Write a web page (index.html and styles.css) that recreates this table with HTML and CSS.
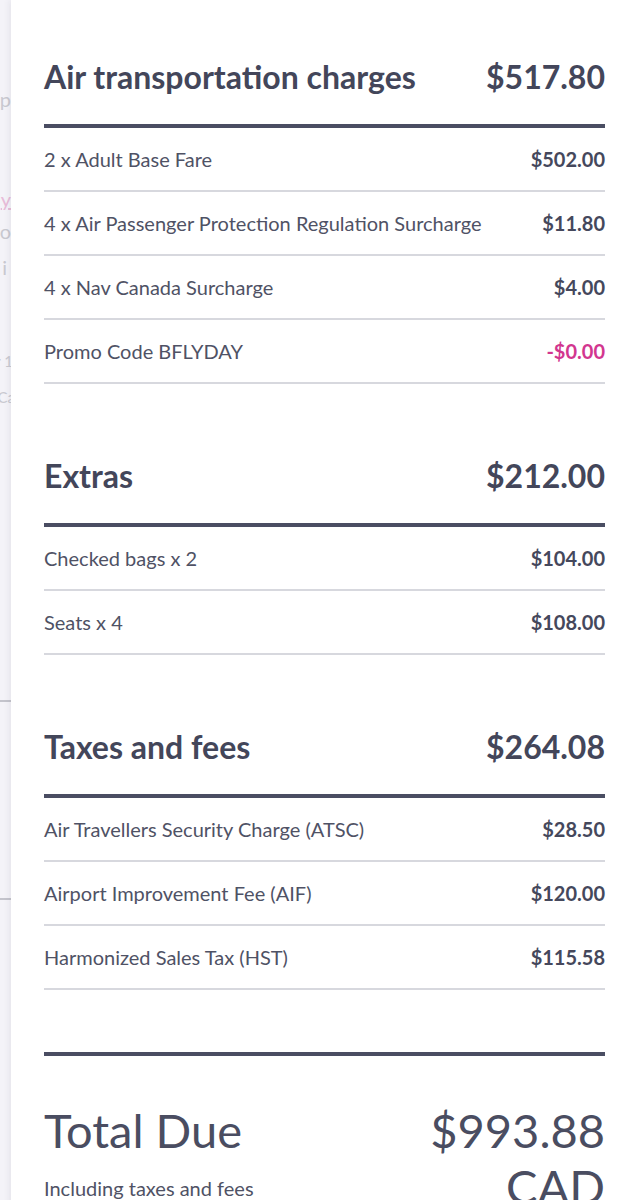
FILE: index.html
```
<!DOCTYPE html>
<html lang="en">

<head>
	<meta charset="UTF-8">
	<meta name="viewport" content="width=device-width, initial-scale=1.0">
	<title>Price breakdown</title>
	<link rel="stylesheet" href="styles.css">
</head>

<body>
	<div class="layout">
		<!-- page under the drawer, only a sliver shows -->
		<aside class="behind">
			<div class="ghost ghost-p"><span>p</span></div>
			<div class="ghost ghost-pink"><span>y</span></div>
			<div class="ghost ghost-o"><span>o</span></div>
			<div class="ghost ghost-i"><span>i</span></div>
			<div class="ghost ghost-small ghost-r"><span>r 1</span></div>
			<div class="ghost ghost-small ghost-ca"><span>Ca</span></div>
			<div class="ghost-rule ghost-rule-a"></div>
			<div class="ghost-rule ghost-rule-b"></div>
		</aside>

		<main class="drawer">
			<section class="group">
				<header class="group-head">
					<h2>Air transportation charges</h2>
					<span class="group-total">$517.80</span>
				</header>
				<div class="line">
					<span>2 x Adult Base Fare</span>
					<strong>$502.00</strong>
				</div>
				<div class="line">
					<span>4 x Air Passenger Protection Regulation Surcharge</span>
					<strong>$11.80</strong>
				</div>
				<div class="line">
					<span>4 x Nav Canada Surcharge</span>
					<strong>$4.00</strong>
				</div>
				<div class="line">
					<span>Promo Code BFLYDAY</span>
					<strong class="promo">-$0.00</strong>
				</div>
			</section>

			<section class="group">
				<header class="group-head">
					<h2>Extras</h2>
					<span class="group-total">$212.00</span>
				</header>
				<div class="line">
					<span>Checked bags x 2</span>
					<strong>$104.00</strong>
				</div>
				<div class="line">
					<span>Seats x 4</span>
					<strong>$108.00</strong>
				</div>
			</section>

			<section class="group">
				<header class="group-head">
					<h2>Taxes and fees</h2>
					<span class="group-total">$264.08</span>
				</header>
				<div class="line">
					<span>Air Travellers Security Charge (ATSC)</span>
					<strong>$28.50</strong>
				</div>
				<div class="line">
					<span>Airport Improvement Fee (AIF)</span>
					<strong>$120.00</strong>
				</div>
				<div class="line">
					<span>Harmonized Sales Tax (HST)</span>
					<strong>$115.58</strong>
				</div>
			</section>

			<section class="total">
				<div class="total-left">
					<h1>Total Due</h1>
					<p>Including taxes and fees</p>
				</div>
				<div class="total-right">$993.88 CAD</div>
			</section>
		</main>
	</div>
</body>

</html>
```

FILE: styles.css
```
body {
	margin: 0;
	font-family: Lato, "Noto Sans", sans-serif;
	color: #45485c;
	background: #f4f3f8;
}

.layout {
	display: flex;
	min-height: 1200px;
	overflow: hidden;
}

.behind {
	width: 11px;
	flex: none;
	overflow: hidden;
	background: #f4f3f8;
}

.ghost {
	display: flex;
	justify-content: flex-end;
	white-space: nowrap;
	font-size: 20px;
	line-height: 22px;
	color: #c9c9d0;
}
.ghost-p { margin-top: 88px; }
.ghost-pink { margin-top: 78px; color: #e8bcd8; text-decoration: underline; }
.ghost-o { margin-top: 10px; }
.ghost-i { margin-top: 14px; padding-right: 4px; }
.ghost-small { font-size: 15px; }
.ghost-r { margin-top: 72px; margin-right: -2px; }
.ghost-ca { margin-top: 14px; margin-right: -4px; }

.ghost-rule {
	height: 2px;
	background: #c4c4cc;
}
.ghost-rule-a { margin-top: 292px; }
.ghost-rule-b { margin-top: 196px; }

.drawer {
	flex: 1;
	background: #fff;
	padding: 58px 15px 0 33px;
	box-shadow: -2px 0 6px rgba(60, 60, 90, 0.08);
}

.group + .group {
	margin-top: 73px;
}

.group-head {
	display: flex;
	justify-content: space-between;
	align-items: center;
	padding-bottom: 28px;
	border-bottom: 4px solid #4a4d62;
	font-size: 32px;
	line-height: 38px;
	font-weight: 700;
	color: #43465a;
}
.group-head h2 {
	margin: 0;
	font-size: inherit;
}

.line {
	display: flex;
	justify-content: space-between;
	align-items: center;
	height: 62px;
	border-bottom: 2px solid #d7d8de;
	font-size: 20px;
	color: #4f5265;
}
.line strong {
	font-weight: 700;
	color: #45485c;
}
.line .promo {
	color: #d2368f;
}

.total {
	display: flex;
	margin-top: 62px;
	padding-top: 46px;
	border-top: 4px solid #4a4d62;
}
.total-left {
	flex: 1;
}
.total-right {
	width: 200px;
	text-align: right;
	font-size: 47px;
	line-height: 56px;
	color: #4a4d61;
}
.total h1 {
	margin: 0;
	font-size: 47px;
	line-height: 56px;
	font-weight: 400;
	color: #4a4d61;
}
.total p {
	margin: 18px 0 0;
	font-size: 20px;
	color: #4f5265;
}
```
